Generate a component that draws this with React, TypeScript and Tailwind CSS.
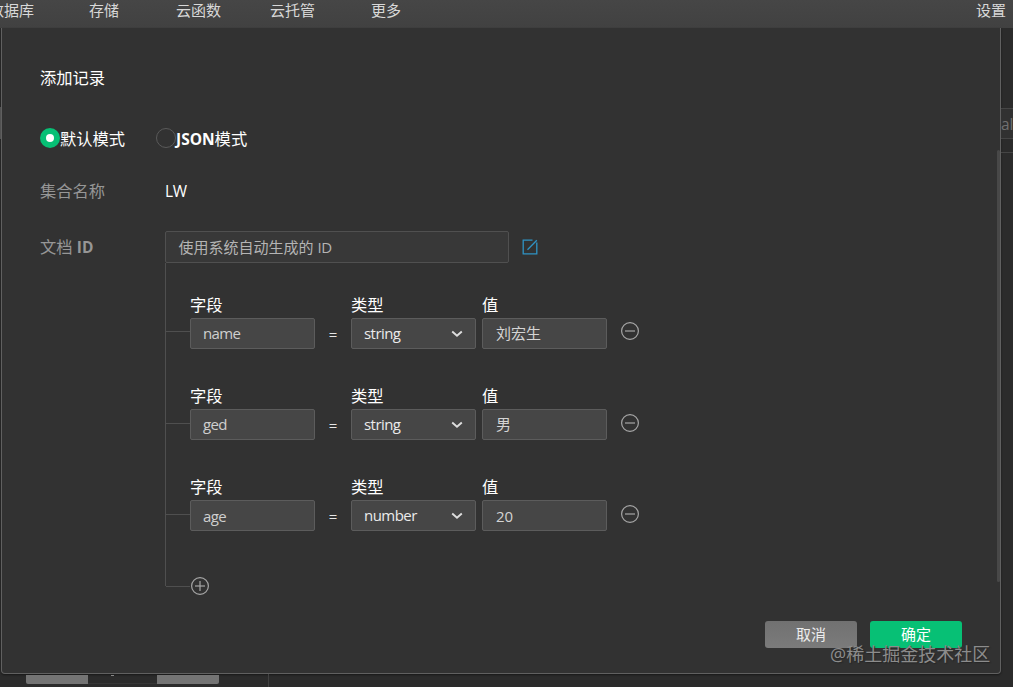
import React from "react";

type Row = {
  field: string;
  type: string;
  value: string;
  branch: string;
  text: string;
};

const rows: Row[] = [
  { field: "name", type: "string", value: "刘宏生", branch: "mt-[37px]", text: "pb-[2px]" },
  { field: "ged", type: "string", value: "男", branch: "mt-[38px]", text: "pb-[2px]" },
  { field: "age", type: "number", value: "20", branch: "mt-[38px]", text: "" },
];

const box =
  "flex h-[31px] w-[125px] items-center rounded-[2px] border border-[#5c5c5c] bg-[#464646] text-[15px] leading-[20px]";

function Circle({ plus = false }: { plus?: boolean }) {
  return (
    <svg width="20" height="20" viewBox="0 0 20 20" fill="none" stroke="#a6a6a6" strokeWidth="1.2" className="shrink-0">
      <circle cx="10" cy="10" r="8.4" />
      <path d="M5 10h10" />
      {plus && <path d="M10 5v10" />}
    </svg>
  );
}

function Label({ children }: { children: React.ReactNode }) {
  return <div className="h-[24px] text-[16.3px] leading-[23px] text-white">{children}</div>;
}

function RecordRow({ row }: { row: Row }) {
  return (
    <div className="flex h-[91px] items-start">
      <div className={`h-px w-[24px] shrink-0 bg-[#4f4f4f] ${row.branch}`} />
      <div>
        <Label>字段</Label>
        <div className={`${box} pl-[12px] text-[#cfcfcf] ${row.text}`}>
          <span className="font-medium tracking-[-0.6px]">{row.field}</span>
        </div>
      </div>
      <div className="mt-[30px] w-[36px] text-center text-[15px] leading-[20px] text-[#e6e6e6]">=</div>
      <div>
        <Label>类型</Label>
        <div className={`${box} justify-between pr-[12px] pl-[12px] text-[#ebebeb]`}>
          <span className="-mt-[2px] font-medium tracking-[-0.55px]">{row.type}</span>
          <svg width="12" height="8" viewBox="0 0 12 8" fill="none" stroke="#dedede" strokeWidth="1.9">
            <path d="M1.2 1.5 6 5.7l4.8-4.2" />
          </svg>
        </div>
      </div>
      <div className="ml-[6px]">
        <Label>值</Label>
        <div className={`${box} pl-[13px] text-[15.2px] text-[#d4d4d4] ${row.text}`}>{row.value}</div>
      </div>
      <div className={`ml-[13px] ${row.branch}`}>
        <div className="-mt-[10px]">
          <Circle />
        </div>
      </div>
    </div>
  );
}

export default function App() {
  return (
    <div className="relative flex h-[687px] w-[1013px] flex-col overflow-hidden bg-[#2b2b2b] font-['Open_Sans','Noto_Sans_CJK_SC',sans-serif]">
      <header className="flex h-[28px] shrink-0 items-start bg-linear-to-b from-[#464646] to-[#414141] text-[15px] leading-[20px] whitespace-nowrap text-[#d8d8d8]">
        <span className="-ml-[11px] w-[100px]">数据库</span>
        <span className="w-[87px]">存储</span>
        <span className="w-[94px]">云函数</span>
        <span className="w-[101px]">云托管</span>
        <span>更多</span>
        <span className="mr-[7px] ml-auto">设置</span>
      </header>

      <div className="flex h-[646px] shrink-0">
        <div className="w-px shrink-0 pt-[79px]">
          <div className="h-[32px] bg-[#686868]" />
        </div>
        <main className="flex w-[1000px] shrink-0 rounded-b-[4px] border border-t-0 border-[#606060] bg-[#323232] shadow-[0_1px_2px_#181818]">
          <div className="flex w-[995px] flex-col pl-[38px]">
            <h1 className="mt-[38px] text-[16.3px] leading-[24px] text-white">添加记录</h1>

            <div className="mt-[38px] flex h-[20px] items-center text-[16.3px] leading-[20px] text-white">
              <span className="flex size-[20px] items-center justify-center rounded-full bg-[#07c075]">
                <span className="size-[8px] rounded-full bg-white" />
              </span>
              <span className="w-[96px] pt-px">默认模式</span>
              <span className="size-[20px] shrink-0 rounded-full border border-[#5a5a5a]" />
              <span className="pt-px">
                <span className="text-[15.5px] font-bold">JSON</span>模式
              </span>
            </div>

            <div className="mt-[31px] flex text-[16.3px] leading-[24px]">
              <span className="w-[125px] text-[#969696]">集合名称</span>
              <span className="text-[15.5px] font-medium tracking-[-0.3px] text-white">LW</span>
            </div>

            <div className="mt-[28px] flex items-start">
              <div className="w-[125px] pt-[4px] text-[16.3px] leading-[24px] text-[#969696]">
                文档 <span className="text-[15.5px] font-bold">ID</span>
              </div>
              <div>
                <div className="flex items-center">
                  <div className="flex h-[32px] w-[344px] items-center rounded-[2px] border border-[#505050] bg-[#383838] pl-[12.5px] text-[15px] text-[#b4b4b4]">
                    <span>
                      使用系统自动生成的 <span className="tracking-[-0.3px]">ID</span>
                    </span>
                  </div>
                  <svg width="16" height="16" viewBox="0 0 16 16" fill="none" stroke="#2f93c4" strokeWidth="1.3" className="ml-[13px]">
                    <path d="M10.5 1.2H1.2v13.6h13.6V3.5M5.5 10.8 14.8 1.2" />
                  </svg>
                </div>
                <div className="h-[323px] border-l border-[#4f4f4f] pt-[31px]">
                  {rows.map((row) => (
                    <RecordRow key={row.field} row={row} />
                  ))}
                  <div className="flex items-center pt-[9px]">
                    <div className="h-px w-[24px] bg-[#4f4f4f]" />
                    <Circle plus />
                  </div>
                </div>
              </div>
            </div>

            <div className="mt-[35px] flex justify-end gap-[13px] pr-[35px] text-center text-[15px] leading-[27px] text-white">
              <button className="h-[27px] w-[92px] rounded-[3px] bg-linear-to-b from-[#717171] to-[#7b7b7b] text-[#ececec]">取消</button>
              <button className="h-[27px] w-[92px] rounded-[3px] bg-[#07c075]">确定</button>
            </div>
          </div>
          <div className="mt-[122px] h-[432px] w-[3px] rounded-full bg-[#484848]" />
        </main>
        <div className="w-[12px] overflow-hidden pt-[80px]">
          <div className="h-[31px] border-y border-[#454545] bg-[#313131] text-[15.5px] leading-[31px] text-[#707070]">al</div>
          <div className="mt-[13px] h-px bg-[#454545]" />
        </div>
      </div>

      <div className="flex h-[13px] pl-[26px]">
        <div className="mt-px h-[9px] w-[62px] rounded-bl-[2px] bg-[#747474]" />
        <div className="h-[10px] w-[69px] border-b border-[#363636] pl-[23px]">
          <div className="mt-px h-px w-[3px] bg-[#888888]" />
        </div>
        <div className="mt-px h-[9px] w-[62px] rounded-br-[2px] bg-[#747474]" />
        <div className="ml-[49px] w-px bg-[#414141]" />
      </div>

      <div className="absolute top-[641px] left-[830px] text-[18px] leading-[26px] whitespace-nowrap text-[#8c8c8c] [text-shadow:1px_1px_1px_#262626]">
        @稀土掘金技术社区
      </div>
    </div>
  );
}
